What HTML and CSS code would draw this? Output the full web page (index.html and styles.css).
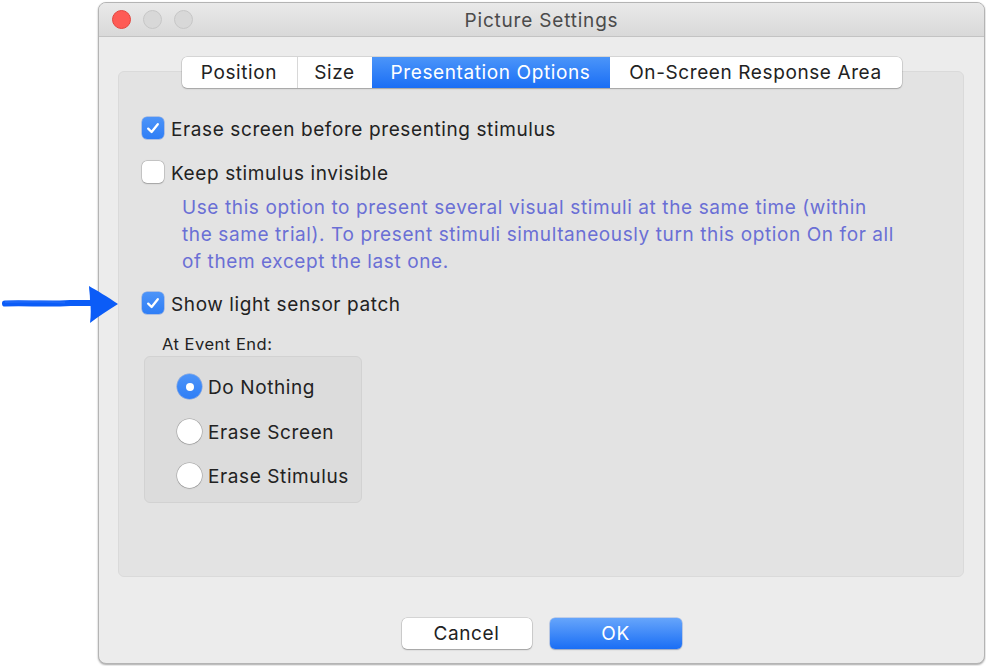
FILE: index.html
```html
<!DOCTYPE html>
<html>
<head>
<meta charset="utf-8">
<title>Picture Settings</title>
<link rel="stylesheet" href="styles.css">
</head>
<body>
<div class="stage">
  <svg class="arrow" width="125" height="50" viewBox="0 0 125 50">
    <path d="M5 23.5 C25 22.5 45 24.5 70 23 C78 22.8 85 23.2 92 23" stroke="#0b5cf7" stroke-width="6" stroke-linecap="round" fill="none"/>
    <path d="M5 22 L40 21.5 L65 22.5" stroke="#2a6ff9" stroke-width="2" fill="none" opacity="0.6"/>
    <path d="M89 6 C96 10 108 17 118 24 C108 30 98 37 90 43 C91 35 91 28 90 20 C90 14 89 10 89 6 Z" fill="#0b5cf7"/>
  </svg>
  <div class="window">
    <div class="titlebar">
      <div class="lights">
        <span class="light close"></span>
        <span class="light"></span>
        <span class="light"></span>
      </div>
      <div class="title">Picture Settings</div>
    </div>
    <div class="body">
      <div class="tabs">
        <div class="tab">Position</div>
        <div class="tab">Size</div>
        <div class="tab active">Presentation Options</div>
        <div class="tab">On-Screen Response Area</div>
      </div>
      <div class="panel">
        <label class="check-row">
          <span class="checkbox on"><svg width="22" height="22" viewBox="0 0 22 22"><path d="M6.2 11.6 L9.6 15 L15.8 7.2" stroke="#fff" stroke-width="2.3" fill="none" stroke-linecap="round" stroke-linejoin="round"/></svg></span>
          <span class="label">Erase screen before presenting stimulus</span>
        </label>
        <label class="check-row second">
          <span class="checkbox"></span>
          <span class="label">Keep stimulus invisible</span>
        </label>
        <p class="hint">Use this option to present several visual stimuli at the same time (within<br>the same trial). To present stimuli simultaneously turn this option On for all<br>of them except the last one.</p>
        <label class="check-row third">
          <span class="checkbox on"><svg width="22" height="22" viewBox="0 0 22 22"><path d="M6.2 11.6 L9.6 15 L15.8 7.2" stroke="#fff" stroke-width="2.3" fill="none" stroke-linecap="round" stroke-linejoin="round"/></svg></span>
          <span class="label">Show light sensor patch</span>
        </label>
        <div class="group-title">At Event End:</div>
        <div class="group">
          <div class="radio-row"><span class="radio on"></span><span class="label">Do Nothing</span></div>
          <div class="radio-row"><span class="radio"></span><span class="label">Erase Screen</span></div>
          <div class="radio-row"><span class="radio"></span><span class="label">Erase Stimulus</span></div>
        </div>
      </div>
      <div class="footer">
        <button class="btn">Cancel</button>
        <button class="btn primary">OK</button>
      </div>
    </div>
  </div>
</div>
</body>
</html>
```
FILE: styles.css
```css
* { box-sizing: border-box; }
html, body { margin: 0; padding: 0; background: #ffffff; }
body {
  font-family: "Inter", "Liberation Sans", sans-serif;
  color: #222222;
  width: 986px;
  height: 666px;
  overflow: hidden;
  letter-spacing: 0.6px;
}
.stage {
  position: relative;
  padding: 2px 0 0 98px;
}
.arrow {
  position: absolute;
  left: 0;
  top: 280px;
  z-index: 5;
}
.window {
  width: 887px;
  height: 662px;
  border: 1px solid #b4b4b4;
  border-radius: 8px;
  box-shadow: 0 1px 2px rgba(0,0,0,0.35);
  background: #ececec;
  display: flex;
  flex-direction: column;
  overflow: hidden;
}
.titlebar {
  height: 34px;
  flex: none;
  background: linear-gradient(#e9e9e9, #d9d9d9);
  border-bottom: 1px solid #c3c3c3;
  display: flex;
  align-items: center;
  position: relative;
}
.lights {
  display: flex;
  gap: 12px;
  padding-left: 13px;
}
.light {
  width: 19px;
  height: 19px;
  border-radius: 50%;
  background: #d8d8d8;
  border: 1px solid #c6c6c6;
}
.light.close {
  background: #fe5b55;
  border-color: #e2463f;
}
.title {
  position: absolute;
  left: 0;
  right: 0;
  text-align: center;
  font-size: 19px;
  color: #4b4b4b;
  top: 6px;
  letter-spacing: 0.8px;
}
.body {
  flex: 1;
  display: flex;
  flex-direction: column;
  padding: 20px 20px 14px 19px;
}
.tabs {
  align-self: center;
  display: flex;
  height: 31px;
  margin-bottom: -17px;
  position: relative;
  z-index: 1;
  background: #fff;
  border-radius: 5px;
  box-shadow: 0 0 0 0.5px rgba(0,0,0,0.18), 0 1px 1.5px rgba(0,0,0,0.22);
  margin-left: 1px;
}
.tab {
  font-size: 19px;
  line-height: 31px;
  text-align: center;
  color: #222;
  border-left: 1px solid #d8d8d8;
}
.tab:first-child { border-left: none; width: 115px; border-radius: 5px 0 0 5px; }
.tab:nth-child(2) { width: 75px; }
.tab:nth-child(3) { width: 238px; }
.tab:nth-child(4) { width: 292px; border-radius: 0 5px 5px 0; }
.tab.active {
  background: linear-gradient(#4b95f9, #1a6ef5);
  color: #fff;
  border-left: none;
}
.tab.active + .tab { border-left: none; }
.panel {
  height: 506px;
  flex: none;
  background: #e3e3e3;
  border: 1px solid #dadada;
  border-radius: 6px;
  padding: 45px 0 0 23px;
}
.check-row {
  display: flex;
  align-items: center;
  gap: 7px;
  height: 22px;
}
.check-row.second { margin-top: 22px; }
.check-row.third { margin-top: 17px; }
.checkbox {
  width: 22px;
  height: 22px;
  border-radius: 5px;
  background: #fff;
  box-shadow: 0 0 0 0.5px rgba(0,0,0,0.22), 0 0.5px 1.5px rgba(0,0,0,0.2);
  flex: none;
  display: block;
}
.checkbox svg { display: block; }
.checkbox.on {
  background: linear-gradient(#4d94f8, #2f7ef6);
  box-shadow: 0 0 0 0.5px rgba(20,90,220,0.5);
}
.label {
  font-size: 19px;
  color: #222;
  position: relative;
  top: 1px;
}
.hint {
  margin: 11px 0 0 40px;
  font-size: 19px;
  line-height: 27px;
  color: #6a6fd5;
}
.group-title {
  margin: 20px 0 0 20px;
  font-size: 16.5px;
  color: #222;
  line-height: 20px;
  letter-spacing: 0.5px;
}
.group {
  margin: 2px 0 0 2px;
  width: 218px;
  height: 147px;
  background: #dcdcdc;
  border: 1px solid #d2d2d2;
  border-radius: 6px;
  padding: 17px 0 0 32px;
  display: flex;
  flex-direction: column;
  gap: 19.5px;
}
.radio-row {
  display: flex;
  align-items: center;
  gap: 6px;
  height: 25px;
}
.radio {
  width: 25px;
  height: 25px;
  border-radius: 50%;
  background: #fff;
  box-shadow: 0 0 0 0.5px rgba(0,0,0,0.25), 0 0.5px 1.5px rgba(0,0,0,0.2);
  flex: none;
  position: relative;
}
.radio.on {
  background: linear-gradient(#4d94f8, #2f7ef6);
  box-shadow: 0 0 0 0.5px rgba(20,90,220,0.5);
}
.radio.on::after {
  content: "";
  position: absolute;
  left: 8.5px;
  top: 8.5px;
  width: 8px;
  height: 8px;
  border-radius: 50%;
  background: #fff;
}
.footer {
  display: flex;
  justify-content: center;
  gap: 18px;
  margin-top: 41px;
  padding-left: 1px;
}
.btn {
  font-family: inherit;
  font-size: 19px;
  letter-spacing: 0.6px;
  height: 31px;
  border: none;
  border-radius: 5px;
  background: #fff;
  color: #222;
  box-shadow: 0 0 0 0.5px rgba(0,0,0,0.2), 0 1px 1.5px rgba(0,0,0,0.25);
  width: 130px;
  padding: 0;
}
.btn.primary {
  width: 132px;
  background: linear-gradient(#66a5fb, #1a6ef5);
  color: #fff;
  box-shadow: 0 0 0 0.5px rgba(20,90,220,0.4), 0 1px 1.5px rgba(0,0,0,0.2);
}
```
